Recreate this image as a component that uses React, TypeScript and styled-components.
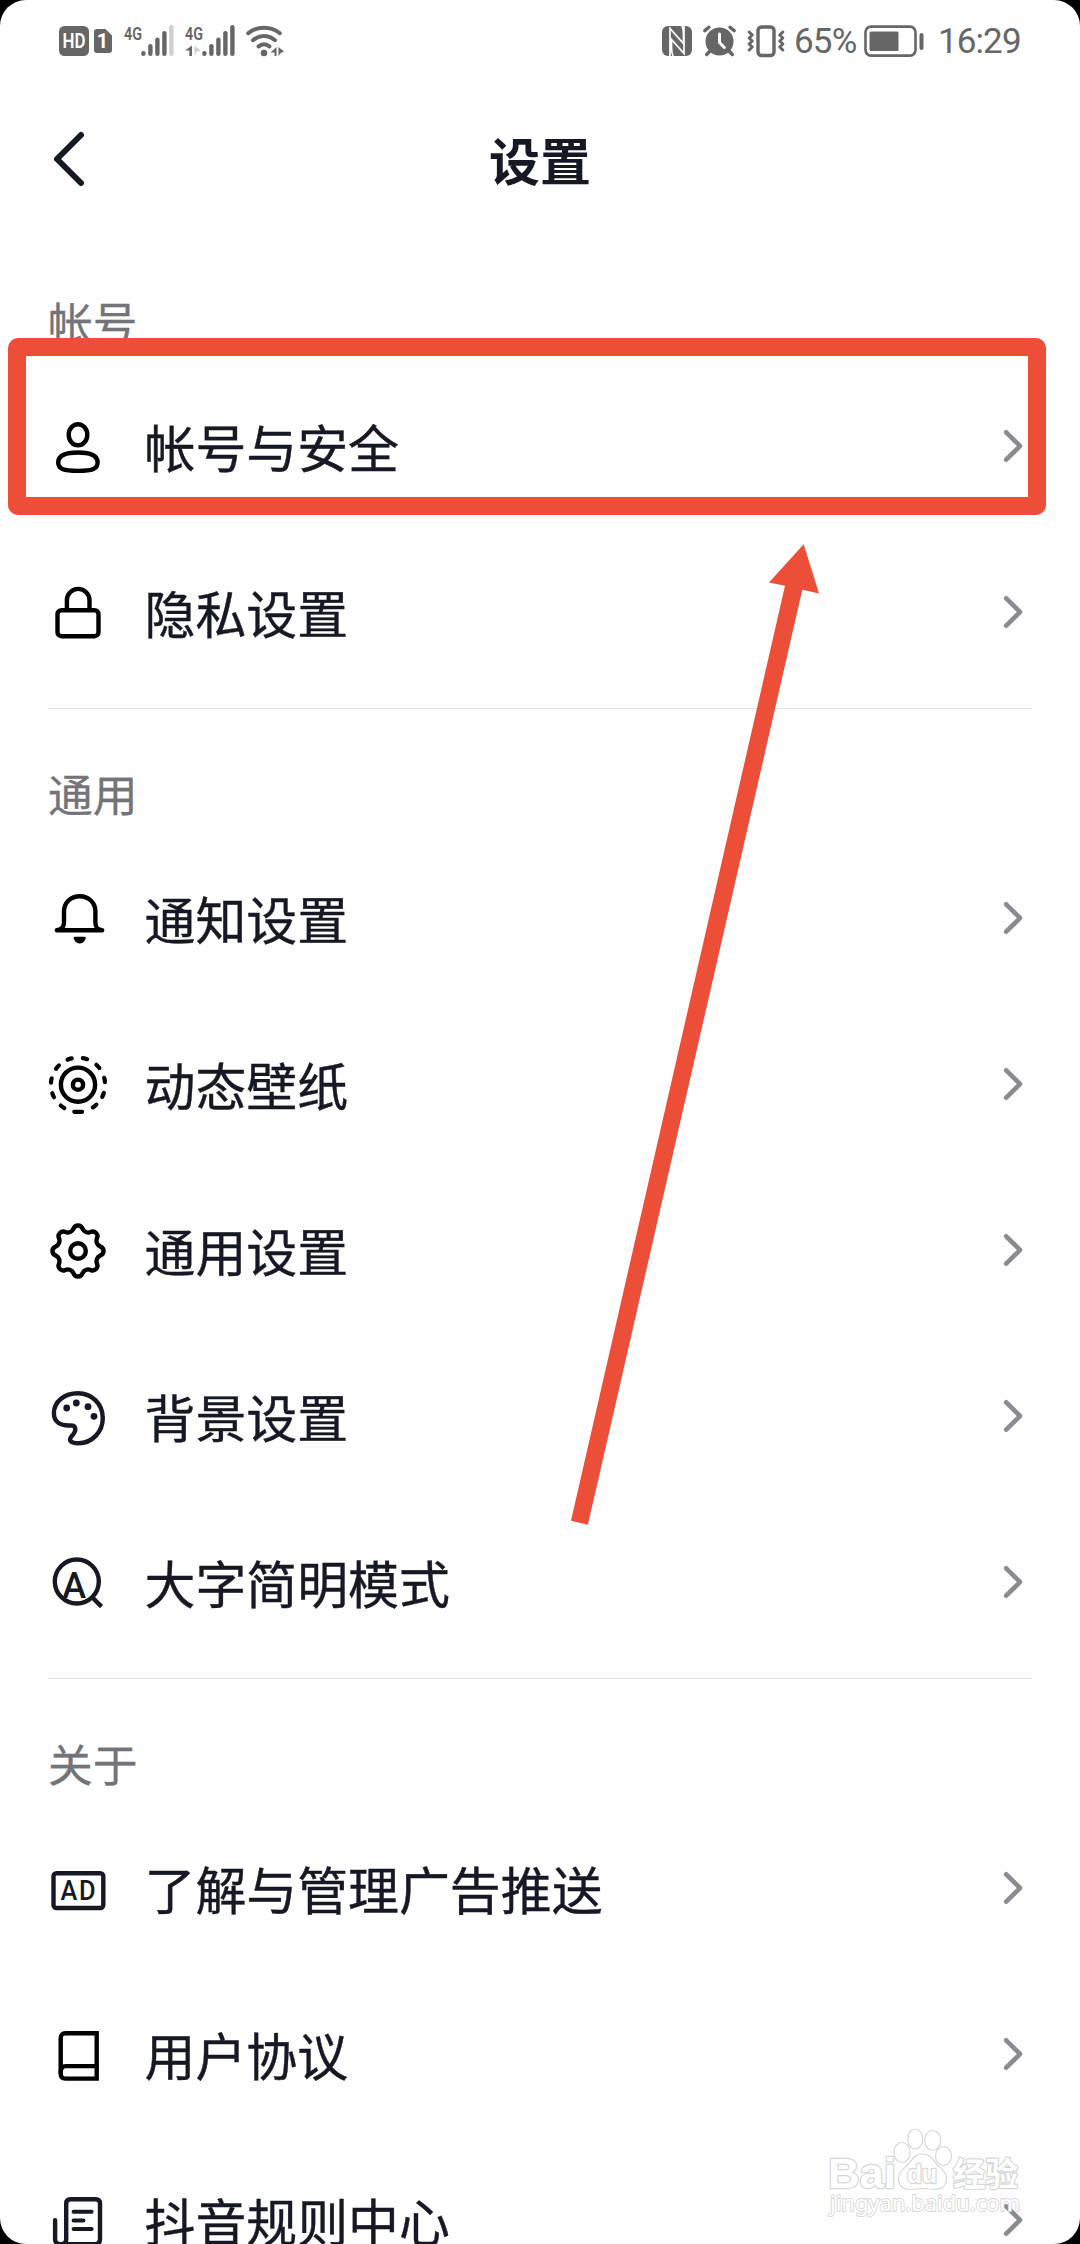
import type { ReactNode } from "react";
import styled, { createGlobalStyle } from "styled-components";

const colors = {
  text: "#161823",
  sub: "#737479",
  arrow: "#8a8b90",
  line: "#e1e1e2",
  status: "#666666",
  mark: "#ec4e38",
  watermark: "#d6d6d6",
};

const cjk = `"Noto Sans CJK SC", sans-serif`;

/* ---------- status bar icons ---------- */

const HdIcon = () => (
  <svg width="54" height="32" viewBox="0 0 54 32">
    <rect x="0" y="1" width="30" height="30" rx="5.500" fill={colors.status} />
    <text x="15" y="23" fontFamily="Roboto" fontWeight="600" fontSize="19.500" fill="#fff" textAnchor="middle" textLength="23" lengthAdjust="spacingAndGlyphs">HD</text>
    <path d="M38 4H46.500L53 10.500V25a3 3 0 0 1-3 3H38a3 3 0 0 1-3-3V7a3 3 0 0 1 3-3Z" fill={colors.status} />
    <text x="43.500" y="23" fontFamily="Roboto" fontWeight="700" fontSize="20" fill="#fff" textAnchor="middle">1</text>
  </svg>
);

const bars = [5, 12, 18.5, 25, 31];

const SignalIcon = ({ weak, data }: { weak?: boolean; data?: boolean }) => (
  <svg width="50" height="32" viewBox="0 0 50 32">
    <text x="0" y="14.500" fontFamily="Roboto" fontWeight="600" fontSize="19" fill={colors.status} textLength="18" lengthAdjust="spacingAndGlyphs">4G</text>
    {data && <path d="M7 20.500v10.500H4.300v-5.500H0z" fill={colors.status} />}
    {data && <path d="M9.500 20.500l6.500 5.500H12l-2.500 5z" fill="#d0d0d0" />}
    {bars.map((h, i) => (
      <rect key={h} x={17.2 + i * 7} y={31 - h} width="4.400" height={h} rx="2.200" fill={weak && i === 4 ? "#d0d0d0" : colors.status} />
    ))}
  </svg>
);

const WifiIcon = () => (
  <svg width="38" height="32" viewBox="0 0 38 32">
    <g fill="none" stroke={colors.status} strokeWidth="4" strokeLinecap="round">
      <path d="M2.200 8.200C11 0.800 25 0.800 33.800 8.200" />
      <path d="M7 15.200C13.500 9.500 22.500 9.500 29 15.200" />
      <path d="M12.500 21.500C15.800 18.600 20.200 18.600 23.500 21.500" />
    </g>
    <circle cx="18" cy="28" r="3.300" fill={colors.status} />
    <path d="M30.500 22v9h-2v-3.500H24.500zM32.500 22l5.500 4.500-3.300 1.500-2.200 3z" fill={colors.status} />
  </svg>
);

const NfcIcon = () => (
  <svg width="30" height="32" viewBox="0 0 30 32">
    <rect y="1" width="30" height="30" rx="6" fill={colors.status} />
    <path d="M8 31V3.500L21.500 18.500V10C21.500 6 21.200 3.500 20 1M22 1v27.500L9.500 14.500V22c0 4 .3 6.500 1.500 9" fill="none" stroke="#fff" strokeWidth="1.700" />
  </svg>
);

const AlarmIcon = () => (
  <svg width="33" height="32" viewBox="0 0 33 32">
    <circle cx="16.500" cy="16.500" r="14" fill={colors.status} />
    <path d="M1.800 5.600L6 2.200M31.200 5.600L27 2.200M7 26l-3.300 3.500M26 26l3.300 3.500" stroke={colors.status} strokeWidth="3.400" strokeLinecap="round" />
    <path d="M16.500 9v8.500l4.800 5" fill="none" stroke="#fff" strokeWidth="3" strokeLinecap="round" strokeLinejoin="round" />
  </svg>
);

const VibrateIcon = () => (
  <svg width="38" height="32" viewBox="0 0 38 32">
    <g fill="none" stroke={colors.status} strokeLinecap="round" strokeLinejoin="round">
      <rect x="11" y="2" width="16" height="28.500" rx="3.500" strokeWidth="3.400" />
      <path d="M2.200 7l3 3-3 3 3 3-3 3 3 3-3 3M35.800 7l-3 3 3 3-3 3 3 3-3 3 3 3" strokeWidth="3" />
    </g>
  </svg>
);

const BatteryIcon = () => (
  <svg width="60" height="32" viewBox="0 0 60 32">
    <rect x="1.500" y="1.600" width="50" height="29" rx="5.500" fill="none" stroke={colors.status} strokeWidth="2.600" />
    <rect x="5.500" y="6.500" width="29" height="19.500" rx="1.500" fill={colors.status} />
    <rect x="55.500" y="8" width="4" height="17" rx="2" fill={colors.status} />
  </svg>
);

/* ---------- row icons, 60 x 60 ---------- */

const UserIcon = () => (
  <>
    <ellipse cx="30" cy="18.800" rx="9.300" ry="10.600" />
    <path d="M10.200 46.500c0-6.800 7.300-10 19.800-10s19.600 3.200 19.600 10c0 6.200-4.600 8.400-19.600 8.400s-19.800-2.200-19.800-8.400z" />
  </>
);

const LockIcon = () => (
  <>
    <rect x="9.500" y="28.200" width="41" height="26" rx="4" />
    <path d="M18.900 28V18.200a11.300 11.300 0 0 1 22.600 0V28" />
  </>
);

const BellIcon = () => (
  <>
    <path d="M8.800 42.200H54.200C49 41.500 47.400 39 47.400 34.500V23.500C47.400 14.500 40.500 8.200 31.700 8.200S16 14.500 16 23.500V34.500C16 39 14 41.500 8.800 42.200z" />
    <path d="M27 48.800h9.500c1.600 0 1.600 1.600.6 3-1.200 2.500-3.200 3.800-5.400 3.800s-4.200-1.300-5.400-3.800c-1-1.400-1-3 .7-3z" fill="currentColor" stroke="none" />
  </>
);

const dashAngles = [52, 22, -10, -42.5, -75, -108, -139.5, -171, 157, 125];

const LiveIcon = () => (
  <>
    <circle cx="30" cy="30.700" r="5.100" />
    <circle cx="30" cy="30.700" r="17.100" />
    <path d="M26.300 57.800h7.800" strokeWidth="4.200" />
    {dashAngles.map((angle) => (
      <path key={angle} d="M57 28.500q.3 2.200 0 4.400" strokeWidth="4.200" transform={`rotate(${angle} 30 30.700)`} />
    ))}
  </>
);

// eight round lobes joined by shallow valleys
const gearPoint = (index: number) => {
  const t = ((index - 0.5) * Math.PI) / 8;
  return `${(30 + 22.8 * Math.cos(t)).toFixed(2)} ${(31 + 22.8 * Math.sin(t)).toFixed(2)}`;
};

const gearPath = `M${gearPoint(0)}` + Array.from({ length: 16 }, (_, i) =>
  i % 2 ? `A6.5 6.5 0 0 0 ${gearPoint(i + 1)}` : `A4.7 4.7 0 0 1 ${gearPoint(i + 1)}`
).join("") + "Z";

const GearIcon = () => (
  <>
    <path d={gearPath} />
    <circle cx="30" cy="31" r="7.800" />
  </>
);

const PaletteIcon = () => (
  <>
    <path d="M5.900 27C5.900 16 16 7.200 30 7.200 44 7.200 54.800 18 54.800 32S44 57.200 30.500 57.200C23 57.200 20 54.500 23.500 50.300 29 44.500 28.500 39.400 22.500 39.400 12 40 5.900 36 5.900 27Z" />
    <g fill="currentColor" stroke="none">
      <circle cx="18.700" cy="22" r="3.400" />
      <circle cx="28.300" cy="17" r="3.400" />
      <circle cx="40" cy="20.700" r="3.400" />
      <circle cx="46" cy="30.300" r="3.400" />
    </g>
  </>
);

const LargeTextIcon = () => (
  <>
    <circle cx="28.800" cy="29.500" r="22" />
    <path d="M43.700 44.800l9.800 9.800" strokeLinecap="butt" />
    <text x="26.300" y="45.500" fontFamily="Roboto" fontWeight="500" fontSize="36" fill="currentColor" stroke="none" textAnchor="middle">A</text>
  </>
);

const AdIcon = () => (
  <>
    <rect x="5.500" y="15.200" width="49.800" height="34.800" rx="3" />
    <text x="12.500" y="42.300" fontFamily="Roboto" fontWeight="500" fontSize="28" letterSpacing="2" fill="currentColor" stroke="none" textLength="37" lengthAdjust="spacingAndGlyphs">AD</text>
  </>
);

const BookIcon = () => (
  <>
    <path d="M48.700 9.200H17.500c-3 0-4.800 1.800-4.800 4.800v35.800c0 3 1.800 4.800 4.800 4.800h31.200z" strokeLinejoin="miter" />
    <path d="M12.700 48.500c0-4 1.500-6.400 5-6.400h31" />
  </>
);

const RulesIcon = () => (
  <>
    <path d="M18.200 49V13.500c0-2.800 1.500-4.300 4.300-4.300h25.200c2.800 0 4.300 1.500 4.300 4.300V49c0 3.500-1.800 5.200-5 5.200H12.500c-3.400 0-5.400-1.600-5.400-5V30.300M18.200 49c0 3.500-2 5.200-5 5.200" />
    <path d="M25.600 21.800h18M25.600 30.400h9.800M25.600 39h18" strokeWidth="4" />
  </>
);

/* ---------- data ---------- */

type RowItem = {
  label: string;
  icon: ReactNode;
  black?: boolean;
};

type Section = {
  title: string;
  rows: RowItem[];
};

const sections: Section[] = [
  {
    title: "帐号",
    rows: [
      { label: "帐号与安全", icon: <UserIcon />, black: true },
      { label: "隐私设置", icon: <LockIcon />, black: true },
    ],
  },
  {
    title: "通用",
    rows: [
      { label: "通知设置", icon: <BellIcon />, black: true },
      { label: "动态壁纸", icon: <LiveIcon />, black: true },
      { label: "通用设置", icon: <GearIcon />, black: true },
      { label: "背景设置", icon: <PaletteIcon /> },
      { label: "大字简明模式", icon: <LargeTextIcon /> },
    ],
  },
  {
    title: "关于",
    rows: [
      { label: "了解与管理广告推送", icon: <AdIcon /> },
      { label: "用户协议", icon: <BookIcon />, black: true },
      { label: "抖音规则中心", icon: <RulesIcon /> },
    ],
  },
];

const SettingRow = (props: RowItem) => {
  const { label, icon, black } = props;
  return (
    <StyledRow>
      <StyledRowIcon viewBox="0 0 60 60" $black={black}>{icon}</StyledRowIcon>
      <StyledRowLabel>{label}</StyledRowLabel>
      <StyledChevron viewBox="0 0 20 34">
        <path d="M3.200 3.300L17 17 3.200 30.700" />
      </StyledChevron>
    </StyledRow>
  );
};

const Watermark = () => (
  <StyledWatermark viewBox="0 0 210 104">
    <g fill="#fff" stroke={colors.watermark} strokeWidth="1.200">
      <ellipse cx="82" cy="36.500" rx="8" ry="10" />
      <ellipse cx="95.300" cy="23" rx="7.500" ry="10" />
      <ellipse cx="112.700" cy="24.500" rx="8" ry="10" />
      <ellipse cx="123.500" cy="40" rx="8" ry="9.500" />
      <path d="M102.500 38c7 0 9.500 4.500 13.500 9.500 5 5.500 10.500 8 10.500 15 0 7-4.500 11-11 11-4.500 0-8-1-13-1s-8.500 1-13 1c-6.500 0-11-4-11-11 0-7 5.500-9.500 10.500-15 4-5 6.500-9.500 13.500-9.500z" />
      <g paintOrder="stroke" strokeWidth="2.400" strokeLinejoin="round">
        <text x="8" y="72" fontFamily="Liberation Sans" fontWeight="700" fontSize="42" textLength="68" lengthAdjust="spacingAndGlyphs">Bai</text>
        <text x="87" y="67" fontFamily="Liberation Sans" fontWeight="700" fontSize="25" textLength="30" lengthAdjust="spacingAndGlyphs">du</text>
        <text x="133" y="70" fontFamily="Noto Sans CJK SC" fontWeight="700" fontSize="33" textLength="65" lengthAdjust="spacingAndGlyphs">经验</text>
        <text x="10" y="95" fontFamily="Noto Sans" fontSize="22" strokeWidth="1.800" textLength="190" lengthAdjust="spacingAndGlyphs">jingyan.baidu.com</text>
      </g>
    </g>
  </StyledWatermark>
);

const App = () => {
  return (
    <StyledScreen>
      <GlobalStyle />
      <StyledStatusBar>
        <StyledStatusGroup $gap={11}>
          <HdIcon />
          <SignalIcon weak />
          <SignalIcon data />
          <WifiIcon />
        </StyledStatusGroup>
        <StyledStatusGroup $gap={11}>
          <NfcIcon />
          <AlarmIcon />
          <VibrateIcon />
          <StyledPercent>65%</StyledPercent>
          <BatteryIcon />
          <StyledTime>16:29</StyledTime>
        </StyledStatusGroup>
      </StyledStatusBar>
      <StyledNavBar>
        <StyledBackIcon viewBox="0 0 36 60">
          <path d="M30 6L6 30l24 24" />
        </StyledBackIcon>
        <StyledTitle>设置</StyledTitle>
      </StyledNavBar>
      {sections.map((section) => (
        <StyledSection key={section.title}>
          <StyledSectionTitle>{section.title}</StyledSectionTitle>
          {section.rows.map((row) => (
            <SettingRow key={row.label} {...row} />
          ))}
        </StyledSection>
      ))}
      <Watermark />
      <StyledHighlight />
      <StyledArrow viewBox="0 0 250 982">
        <path d="M233.700 1.300L249 50.500l-16.700-3.800L17.900 981.700 1 977.700 215 42.700l-16-3.200z" />
      </StyledArrow>
    </StyledScreen>
  );
};

const GlobalStyle = createGlobalStyle`
  * {
    box-sizing: border-box;
  }
  body {
    margin: 0;
    background: #000;
  }
`;

const StyledScreen = styled.div`
  position: relative;
  display: flex;
  flex-direction: column;
  width: 1080px;
  height: 2244px;
  overflow: hidden;
  border-radius: 26px;
  background: #fefefe;
  color: ${colors.text};
  font-family: ${cjk};
`;

const StyledStatusBar = styled.div`
  display: flex;
  flex-shrink: 0;
  justify-content: space-between;
  align-items: center;
  height: 82px;
  padding: 0 59px;
`;

const StyledStatusGroup = styled.div<{ $gap: number }>`
  display: flex;
  align-items: center;
  gap: ${(props) => props.$gap}px;
  color: ${colors.status};
  svg {
    overflow: visible;
  }
`;

const StyledPercent = styled.span`
  width: 62px;
  margin-right: -3px;
  margin-left: -2px;
  padding-top: 2px;
  font-family: Roboto, sans-serif;
  font-size: 35px;
  line-height: 36px;
  letter-spacing: -0.8px;
  white-space: nowrap;
`;

const StyledTime = styled.span`
  margin-left: 3px;
  width: 83px;
  padding-top: 2px;
  font-family: Roboto, sans-serif;
  font-size: 35px;
  line-height: 36px;
  letter-spacing: -0.9px;
  white-space: nowrap;
`;

const StyledNavBar = styled.div`
  display: grid;
  flex-shrink: 0;
  grid-template-columns: 1fr auto 1fr;
  align-items: center;
  height: 155px;
  padding: 0 51px 2px;
`;

const StyledBackIcon = styled.svg`
  width: 36px;
  height: 60px;
  fill: none;
  stroke: ${colors.text};
  stroke-width: 6;
  stroke-linecap: round;
  stroke-linejoin: round;
`;

const StyledTitle = styled.h1`
  margin: 0;
  font-size: 51px;
  font-weight: 700;
  line-height: 60px;
`;

const StyledSection = styled.section`
  flex-shrink: 0;
  margin: 0 48px;
  & + & {
    margin-top: 13px;
    border-top: 1px solid ${colors.line};
  }
`;

const StyledSectionTitle = styled.h2`
  height: 126px;
  margin: 0;
  padding-top: 54px;
  color: ${colors.sub};
  font-size: 44.8px;
  font-weight: 400;
  line-height: 60px;
  -webkit-text-stroke: 0.3px ${colors.sub};
`;

const StyledRow = styled.div`
  display: flex;
  align-items: center;
  height: 166px;
  padding-right: 9px;
`;

const StyledRowIcon = styled.svg<{ $black?: boolean }>`
  width: 60px;
  height: 60px;
  overflow: visible;
  color: ${(props) => (props.$black ? "#000" : colors.text)};
  fill: none;
  stroke: currentColor;
  stroke-width: 4.4;
  stroke-linecap: round;
  stroke-linejoin: round;
`;

const StyledRowLabel = styled.span`
  flex: 1;
  margin-left: 36.5px;
  font-size: 50.9px;
  line-height: 60px;
  -webkit-text-stroke: 0.4px ${colors.text};
`;

const StyledChevron = styled.svg`
  width: 20px;
  height: 34px;
  fill: none;
  stroke: ${colors.arrow};
  stroke-width: 4.6;
  stroke-linecap: round;
  stroke-linejoin: round;
`;

const StyledWatermark = styled.svg`
  position: absolute;
  left: 820px;
  top: 2116px;
  width: 210px;
  height: 104px;
`;

const StyledHighlight = styled.div`
  position: absolute;
  left: 8px;
  top: 338px;
  width: 1038px;
  height: 177px;
  border: 18px solid ${colors.mark};
  border-radius: 10px;
`;

const StyledArrow = styled.svg`
  position: absolute;
  left: 570px;
  top: 543px;
  width: 250px;
  height: 982px;
  fill: ${colors.mark};
`;

export default App;
